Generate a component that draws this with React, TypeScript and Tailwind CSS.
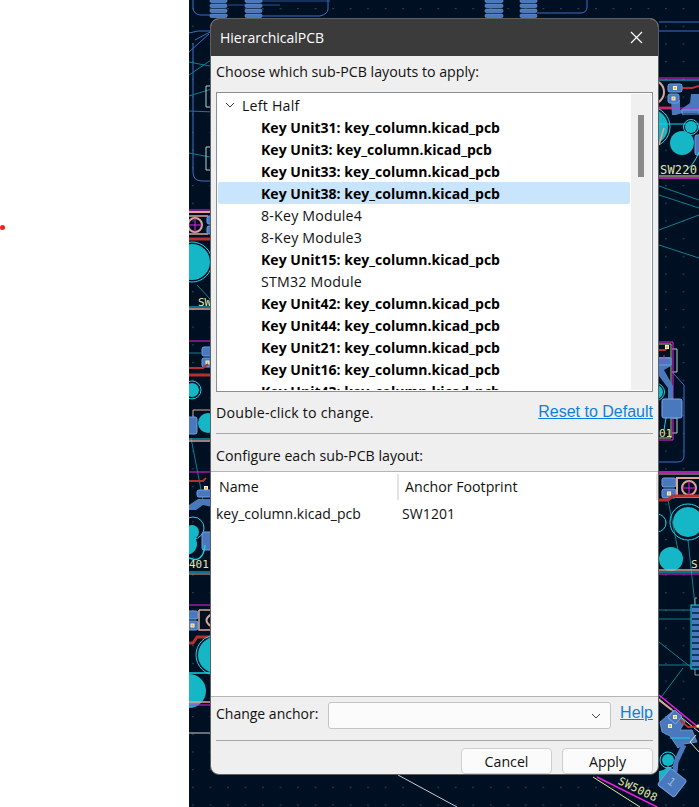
const rows: [string, boolean, boolean?][] = [
  ["Key Unit31: key_column.kicad_pcb", true],
  ["Key Unit3: key_column.kicad_pcb", true],
  ["Key Unit33: key_column.kicad_pcb", true],
  ["Key Unit38: key_column.kicad_pcb", true, true],
  ["8-Key Module4", false],
  ["8-Key Module3", false],
  ["Key Unit15: key_column.kicad_pcb", true],
  ["STM32 Module", false],
  ["Key Unit42: key_column.kicad_pcb", true],
  ["Key Unit44: key_column.kicad_pcb", true],
  ["Key Unit21: key_column.kicad_pcb", true],
  ["Key Unit16: key_column.kicad_pcb", true],
  ["Key Unit43: key_column.kicad_pcb", true],
];

const TEAL = "#15b6c6";
const CYAN = "#17d3ea";
const BLUE = "#4a78bd";
const TRACK = "#3c6fc4";
const MAG = "#f01fe0";
const SALMON = "#dba594";
const PALE = "#e6e6a8";
const RED = "#b5302f";
const RAT = "#0e7f8f";
const YEL = "#e8b43c";

function Pad({ x, y, w, h, dot }: { x: number; y: number; w: number; h: number; dot?: boolean }) {
  return (
    <g>
      <rect x={x} y={y} width={w} height={h} rx="2" fill={BLUE} stroke="#6fa0e0" strokeWidth="1" />
      {dot && <rect x={x + w / 2 - 2} y={y + h / 2 - 2} width="4" height="4" fill="#f5f0d8" />}
      {dot && <rect x={x + w / 2 - 1} y={y + h / 2 - 1} width="2" height="2" fill={YEL} />}
    </g>
  );
}

function Drill({ cx, cy, r, ring }: { cx: number; cy: number; r: number; ring?: number }) {
  return (
    <g>
      <circle cx={cx} cy={cy} r={r} fill={TEAL} />
      {ring && <circle cx={cx} cy={cy} r={ring} fill="none" stroke={CYAN} strokeWidth="1" />}
    </g>
  );
}

function Stack({ x, w }: { x: number; w: number }) {
  return (
    <g>
      {[0, 5, 10, 15].map((d) => (
        <rect key={d} x={x} y={d - 1} width={w} height="3.5" rx="1.5" fill={BLUE} stroke="#6fa0e0" strokeWidth="0.6" />
      ))}
    </g>
  );
}

function Board() {
  return (
    <svg className="absolute inset-0" width={510} height={807} viewBox="189 0 510 807">
      <defs>
        <pattern id="grid" width="17.52" height="17.7" patternUnits="userSpaceOnUse" x="192" y="8">
          <rect x="0.3" y="0" width="1.2" height="1.2" fill="#465466" />
        </pattern>
      </defs>
      <rect x="189" y="0" width="510" height="807" fill="#001023" />
      <rect x="189" y="0" width="510" height="807" fill="url(#grid)" />

      {/* top strip */}
      <g fill="none" stroke={TRACK} strokeWidth="1">
        <path d="M193 0V7Q193 14 200 15H228" />
        <path d="M189 33 198 31H212" />
        <path d="M189 52 209 34" />
        <path d="M193 43V172Q193 181 202 181H212" />
        <path d="M195 40 210 32" />
        <path d="M328 0V9Q328 14 320 16H262" />
        <path d="M587 0V7Q587 13 580 13H537" />
        <path d="M228 5H280M262 1H330" opacity="0.7" />
        <path d="M659 22H699M659 31H699" />
      </g>
      <Stack x={210} w={17} />
      <Stack x={245} w={17} />
      <Stack x={485} w={18} />
      <Stack x={520} w={17} />

      {/* ratsnest */}
      <g fill="none" stroke={RAT} strokeWidth="1">
        <path d="M189 62 215 67" />
        <path d="M189 96 215 88" />
        <path d="M189 111 215 112" />
        <path d="M189 153 215 158" />
        <path d="M189 75 211 60" />
        <path d="M197 285 211 300" />
        <path d="M659 186 699 200" />
        <path d="M659 195 699 208" />
        <path d="M659 230 699 215" />
        <path d="M659 245 699 258" />
        <path d="M191 438 203 500" />
        <path d="M688 540 695 605" />
        <path d="M659 610H692M659 619H692M659 665H692" />
        <path d="M659 642 692 668" />
        <path d="M683 668 659 700" />
        <path d="M668 500 680 560" />
      </g>
      <path d="M398 775 457 807" stroke="#c8ccd0" strokeWidth="1" fill="none" />
      <path d="M189 733H212" stroke="#c8ccc4" strokeWidth="1" fill="none" />

      {/* silk brackets */}
      <g fill="none" stroke="#b5d0c6" strokeWidth="1">
        <path d="M211 86H206V107H211" />
        <path d="M211 147H206V170H211" />
        <path d="M672 349H677V372H672" />
        <path d="M672 418H677V433H672" />
      </g>

      {/* left module 1 */}
      <path d="M189 210H212" stroke={MAG} strokeWidth="1" />
      <path d="M189 212H212" stroke={SALMON} strokeWidth="2" />
      <path d="M189 216H208M189 234H208" stroke={SALMON} strokeWidth="1.5" />
      <circle cx="195" cy="225" r="7" fill="none" stroke={SALMON} strokeWidth="2" />
      <path d="M195 218V232M188 225H202" stroke={MAG} strokeWidth="1" />
      <Pad x={207} y={216} w={5} h={8} />
      <Pad x={207} y={226} w={5} h={8} />
      <path d="M189 239H212" stroke={RED} strokeWidth="3" />
      <Drill cx={192} cy={262} r={18} ring={20} />
      <text x="198" y="306" fontFamily="DejaVu Sans Mono" fontSize="11" fill={PALE}>SW</text>
      <path d="M189 307H212" stroke={CYAN} strokeWidth="1" />
      <path d="M189 309H212" stroke={SALMON} strokeWidth="1.5" />

      {/* left module 2 */}
      <path d="M189 341H212" stroke={MAG} strokeWidth="1" />
      <path d="M189 353H201" stroke={RAT} strokeWidth="1" />
      <Pad x={202} y={347} w={11} h={9} />
      <Pad x={202} y={358} w={11} h={9} dot />
      <path d="M189 368H203L208 364" stroke={RED} strokeWidth="2" fill="none" />
      <path d="M189 375H212" stroke={RED} strokeWidth="3" />
      <Drill cx={192} cy={390} r={7} ring={9} />
      <path d="M193 410H212M193 410V418" stroke={SALMON} strokeWidth="1" fill="none" />
      <Drill cx={208} cy={423} r={10} />
      <rect x="186" y="417" width="11" height="17" rx="2" fill={BLUE} stroke="#6fa0e0" />
      <path d="M189 439H212" stroke={CYAN} strokeWidth="1" />
      <path d="M189 441H212" stroke={SALMON} strokeWidth="1.5" />

      {/* left module 3 */}
      <path d="M189 472H212" stroke={MAG} strokeWidth="1" />
      <path d="M189 481H203L206 478" stroke={RED} strokeWidth="2" fill="none" />
      <rect x="204" y="486" width="4" height="4" fill="#f5f0d8" />
      <rect x="205" y="487" width="2" height="2" fill={YEL} />
      <Pad x={197} y={490} w={16} h={7} />
      <path d="M189 505 198 499H212V507L203 505 196 510H189Z" fill={BLUE} />
      <Drill cx={192} cy={532} r={7} />
      <circle cx="193" cy="528" r="11" fill="none" stroke={CYAN} strokeWidth="1" />
      <Drill cx={186} cy={544} r={11} />
      <Pad x={202} y={532} w={11} h={18} />
      <path d="M189 558Q203 564 205 545" stroke={CYAN} strokeWidth="1.5" fill="none" />
      <text x="189" y="568" fontFamily="DejaVu Sans Mono" fontSize="11" fill={PALE}>401</text>
      <path d="M189 572H212" stroke={CYAN} strokeWidth="1" />
      <path d="M189 574H212" stroke={SALMON} strokeWidth="1" />

      {/* left module 4 */}
      <path d="M189 605H212" stroke={MAG} strokeWidth="1" />
      <Pad x={187} y={611} w={11} h={8} />
      <Pad x={187} y={621} w={11} h={9} dot />
      <path d="M199 610H212M199 610V630H212" stroke={SALMON} strokeWidth="1.5" fill="none" />
      <path d="M212 614Q201 620 212 627" stroke={SALMON} strokeWidth="2" fill="none" />
      <path d="M189 643H193L197 637H212" stroke={RED} strokeWidth="3" fill="none" />
      <Drill cx={216} cy={655} r={18} ring={20} />
      <path d="M189 673H212" stroke={CYAN} strokeWidth="1.5" />
      <Drill cx={189} cy={691} r={17} />
      <path d="M189 702H212" stroke={SALMON} strokeWidth="1.5" />
      <path d="M189 705H212" stroke={MAG} strokeWidth="1" />

      {/* right module 1 */}
      <path d="M659 78H699" stroke={MAG} strokeWidth="1" />
      <path d="M659 80H699" stroke={CYAN} strokeWidth="1" />
      <circle cx="652" cy="92" r="12" fill="none" stroke={SALMON} strokeWidth="2" />
      <path d="M682 88 692 88 699 86" stroke={RED} strokeWidth="2" fill="none" />
      <path d="M659 108H672" stroke={RED} strokeWidth="3" />
      <path d="M671 100H680V110L690 103 691 94H699V113H682L676 115H672Z" fill={BLUE} />
      <path d="M682 110H699V114H682Z" fill="none" stroke="#6fa0e0" strokeWidth="1" />
      <Pad x={668} y={84} w={14} h={8} dot />
      <Pad x={668} y={94} w={11} h={9} dot />
      <path d="M659 108H699" stroke={MAG} strokeWidth="1" opacity="0.8" />
      <Drill cx={650} cy={127} r={18} ring={20} />
      <path d="M659 124H699" stroke={CYAN} strokeWidth="1" />
      <Drill cx={691} cy={127} r={6} ring={7.5} />
      <Drill cx={682} cy={143} r={12} />
      <rect x="695" y="135" width="8" height="20" rx="2" fill={BLUE} stroke="#6fa0e0" />
      <path d="M664 128 659 145" stroke={SALMON} strokeWidth="1.5" fill="none" />
      <path d="M699 152Q694 165 686 170" stroke={CYAN} strokeWidth="1" fill="none" />
      <text x="660" y="174" fontFamily="DejaVu Sans Mono" fontSize="12" letterSpacing="0.2" fill={PALE}>SW220</text>
      <path d="M659 176H699" stroke={PALE} strokeWidth="1" />
      <path d="M659 178H699" stroke={MAG} strokeWidth="1.5" />

      {/* right module 2 */}
      <path d="M659 342H673V440H659" stroke={MAG} strokeWidth="1" fill="none" />
      <path d="M659 344H671V438H659" stroke={PALE} strokeWidth="0.8" fill="none" />
      <path d="M659 350H665L667 348" stroke={RED} strokeWidth="2" fill="none" />
      <rect x="665" y="345" width="4" height="4" fill="#f5f0d8" />
      <rect x="666" y="346" width="2" height="2" fill={YEL} />
      <path d="M659 357H671V366L664 370 673 386V400H668V388L659 376Z" fill={BLUE} />
      <path d="M659 358H671V365H659" stroke="#6fa0e0" fill="none" />
      <path d="M664 355V363" stroke={MAG} strokeWidth="1" />
      <Drill cx={656} cy={392} r={7} ring={8.5} />
      <rect x="662" y="399" width="20" height="19" rx="2" fill={BLUE} stroke="#7aa6e2" />
      <path d="M673 373 684 385V455Q684 462 678 462H659" stroke={TRACK} fill="none" />
      <path d="M666 418 664 430" stroke={CYAN} fill="none" />
      <text x="659" y="437" fontFamily="DejaVu Sans Mono" fontSize="11" fill={PALE}>01</text>

      {/* right module 3 */}
      <path d="M659 472H699" stroke={MAG} strokeWidth="1.5" />
      <path d="M659 474H699" stroke={PALE} strokeWidth="0.8" />
      <Pad x={662} y={478} w={14} h={9} />
      <Pad x={662} y={489} w={14} h={9} dot />
      <rect x="677" y="478" width="24" height="19" fill="none" stroke={SALMON} strokeWidth="2" />
      <circle cx="689" cy="488" r="7" fill="none" stroke={SALMON} strokeWidth="2" />
      <path d="M689 481V495M682 488H696" stroke={MAG} strokeWidth="1" />
      <path d="M659 500H668L673 496H699" stroke={RED} strokeWidth="3" fill="none" />
      <Drill cx={688} cy={522} r={15} ring={18} />
      <circle cx="657" cy="523" r="9" fill="none" stroke={CYAN} />
      <Drill cx={671} cy={559} r={12} />
      <text x="691" y="568" fontFamily="DejaVu Sans Mono" fontSize="11" fill={PALE}>S</text>
      <path d="M659 570H699" stroke={SALMON} strokeWidth="1.5" />
      <path d="M659 572H699" stroke={CYAN} strokeWidth="1" />
      <path d="M659 574H699" stroke={MAG} strokeWidth="1" />

      {/* connector */}
      <rect x="691" y="605" width="12" height="64" fill="#0b3a5c" stroke={CYAN} />
      {[608, 614, 620, 626, 632, 638, 644, 650, 656, 662].map((y) => (
        <rect key={y} x="692" y={y} width="10" height="4" fill={BLUE} />
      ))}
      <path d="M697 598H695V605M695 669V675H699" stroke="#8a9aa0" fill="none" />

      {/* rotated footprint */}
      <path d="M597 777 657 807" stroke={MAG} strokeWidth="1.5" />
      <path d="M593 777 640 807" stroke={PALE} strokeWidth="1" />
      <path d="M659 695 699 728" stroke={MAG} strokeWidth="1.5" />
      <path d="M659 699 699 732" stroke={PALE} strokeWidth="1" />
      <path d="M659 700 672 710" stroke={SALMON} strokeWidth="2" />
      <path d="M660 722 673 711 685 722 680 730 692 730 697 742 684 744 678 748 670 736 662 732Z" fill={BLUE} stroke="#6fa0e0" strokeWidth="0.8" />
      <g transform="rotate(40 675 717)"><rect x="670" y="712" width="10" height="10" rx="1" fill={BLUE} stroke="#6fa0e0" /></g>
      <rect x="673" y="715" width="4" height="4" fill="#f5f0d8" />
      <rect x="674" y="716" width="2" height="2" fill={YEL} />
      <rect x="668" y="724" width="4" height="4" fill="#f5f0d8" />
      <rect x="669" y="725" width="2" height="2" fill={YEL} />
      <path d="M680 720 688 727 697 727" stroke={RED} strokeWidth="2" fill="none" />
      <path d="M697 725 699 727" stroke={PALE} strokeWidth="3" />
      <path d="M670 738H690" stroke={CYAN} strokeWidth="1" />
      <path d="M696 735 690 742 699 752" stroke={PALE} strokeWidth="1" fill="none" />
      <path d="M659 776Q667 776 672 769" stroke={TEAL} strokeWidth="10" fill="none" />
      <Drill cx={668} cy={760} r={6} ring={8} />
      <path d="M684 745 676 762 675 772" stroke={BLUE} strokeWidth="5" fill="none" />
      <g transform="rotate(38 672 782)">
        <rect x="662" y="772" width="21" height="21" rx="2" fill={BLUE} stroke="#6fa0e0" />
        <text x="668" y="786" fontFamily="DejaVu Sans" fontSize="11" fill="#9ab8e2">1</text>
      </g>
      <g transform="rotate(26 620 778)">
        <text x="620" y="784" fontFamily="DejaVu Sans Mono" fontSize="11" fill={PALE} letterSpacing="0.4">SW5008</text>
      </g>
    </svg>
  );
}

export default function App() {
  return (
    <div className="relative h-[807px] w-[699px] overflow-hidden bg-white font-['Open_Sans','Noto_Sans',sans-serif] text-[14.2px] text-[#111111]">
      <div className="absolute left-0 top-[225px] h-[5px] w-[5px] rounded-full bg-[#ee2222]" />
      <div className="absolute bottom-0 left-[189px] right-0 top-0 overflow-hidden">
        <Board />
      </div>
      <div className="absolute left-[210px] top-[18px] flex h-[757px] w-[449px] flex-col overflow-hidden rounded-[9px] border border-[#5f5f5f] bg-[#efefef]">
        <div className="flex h-[37px] shrink-0 items-center justify-between bg-[#3b3b3b] pb-[1px] pl-[9px] pr-[15px] text-[14px] text-white">
          <span>HierarchicalPCB</span>
          <svg width="13" height="13" viewBox="0 0 13 13" stroke="white" strokeWidth="1.2"><path d="M1 1 12 12M12 1 1 12" /></svg>
        </div>
        <div className="flex h-[36px] shrink-0 items-center px-[5px] pb-[4px]">Choose which sub-PCB layouts to apply:</div>
        <div className="mx-[5px] flex h-[300px] shrink-0 overflow-hidden border border-[#8a8f96] bg-white p-px">
          <div className="min-w-0 flex-1 overflow-hidden">
            <div className="flex h-[22px] items-center pl-[7px]">
              <svg width="10" height="6" viewBox="0 0 10 6" fill="none" stroke="#333" strokeWidth="1"><path d="M1 1l4 4 4-4" /></svg>
              <span className="ml-[7px] pt-px tracking-[0.2px]">Left Half</span>
            </div>
            {rows.map(([t, b, s]) => (
              <div key={t} className={`flex h-[22px] items-center whitespace-nowrap pl-[43px] ${b ? "text-[14px] font-bold tracking-[0.03px] text-black" : "pt-px tracking-[0.2px]"} ${s ? "rounded-[2px] bg-[#c9e5fd]" : ""}`}>{t}</div>
            ))}
          </div>
          <div className="ml-px w-[20px] shrink-0 bg-[#f0f0f0] pl-[7px] pt-[21px]">
            <div className="h-[62px] w-[6px] bg-[#8a8a8a]" />
          </div>
        </div>
        <div className="flex h-[41px] shrink-0 items-center justify-between px-[5px]">
          <span className="tracking-[0.2px]">Double-click to change.</span>
          <a className="pb-px font-['Liberation_Sans',sans-serif] text-[16px] text-[#0f7fdc] underline">Reset to Default</a>
        </div>
        <div className="mx-[5px] h-px shrink-0 bg-[#a8a8a8]" />
        <div className="flex h-[37px] shrink-0 items-center px-[5px] pt-[6px]">Configure each sub-PCB layout:</div>
        <div className="h-[226px] shrink-0 border-y border-[#b5b5b5] bg-white">
          <div className="flex h-[28px] items-center pt-px">
            <div className="flex h-[26px] w-[188px] items-center border-r-2 border-[#e4e4e4] pl-[8px]">Name</div>
            <div className="flex h-[26px] flex-1 items-center border-r-2 border-[#e4e4e4] pl-[6px]">Anchor Footprint</div>
          </div>
          <div className="flex h-[26px] items-center pl-[5px] pt-[1px] text-[14px]">
            <div className="w-[186px]">key_column.kicad_pcb</div>
            <div className="tracking-[0.1px]">SW1201</div>
          </div>
        </div>
        <div className="flex h-[43px] shrink-0 items-center px-[5px] pb-[6px]">
          <span className="w-[112px] pb-[5px] text-[14px]">Change anchor:</span>
          <div className="flex h-[27px] w-[283px] items-center justify-end rounded-[3px] border border-[#c4c4c4] bg-[#fbfbfb] pr-[9px]">
            <svg width="10" height="6" viewBox="0 0 10 6" fill="none" stroke="#444" strokeWidth="1"><path d="M1 1l4 4 4-4" /></svg>
          </div>
          <a className="ml-auto pb-[6px] font-['Liberation_Sans',sans-serif] text-[16px] text-[#0f7fdc] underline">Help</a>
        </div>
        <div className="mx-[5px] h-px shrink-0 bg-[#a8a8a8]" />
        <div className="flex flex-1 items-start justify-end gap-[10px] px-[5px] pt-[7px]">
          <button className="h-[26px] w-[91px] rounded-[4px] border border-[#d0d0d0] bg-[#fbfbfb] pt-px">Cancel</button>
          <button className="h-[26px] w-[91px] rounded-[4px] border border-[#d0d0d0] bg-[#fbfbfb] pt-px">Apply</button>
        </div>
      </div>
    </div>
  );
}
